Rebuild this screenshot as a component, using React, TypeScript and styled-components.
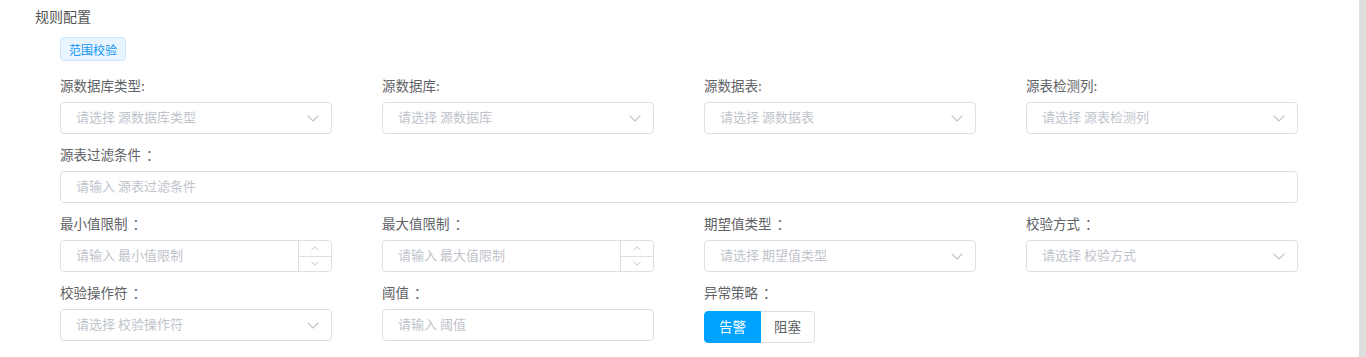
import styled, { createGlobalStyle } from 'styled-components';

const GlobalStyle = createGlobalStyle`
  html, body {
    margin: 0;
    padding: 0;
    background: #fff;
    font-family: "Noto Sans CJK SC", "Noto Sans", "Liberation Sans", sans-serif;
  }
`;

const Page = styled.div`
  display: flex;
  width: 1366px;
  height: 357px;
  overflow: hidden;
`;

const Main = styled.div`
  flex: 1;
  padding: 5px 61px 0 35px;
`;

const Scrollbar = styled.div`
  width: 7px;
  background: #dedede;
`;

const Title = styled.div`
  font-size: 14px;
  line-height: 22px;
  color: #555;
`;

const Form = styled.div`
  padding-left: 25px;
`;

const Tag = styled.div`
  display: inline-flex;
  align-items: center;
  box-sizing: border-box;
  height: 24px;
  margin-top: 10px;
  padding: 0 8px;
  font-size: 12px;
  color: #1296f6;
  background: #e8f4ff;
  border: 1px solid #cfe7fd;
  border-radius: 4px;
`;

const Grid = styled.div`
  display: grid;
  grid-template-columns: repeat(4, 272px);
  column-gap: 50px;
  margin-top: 13px;
`;

const Item = styled.div<{ $full?: boolean }>`
  grid-column: ${(p) => (p.$full ? '1 / -1' : 'auto')};
  margin-bottom: 9px;
`;

const Label = styled.div`
  font-size: 13.5px;
  line-height: 22px;
  color: #606266;
  margin-bottom: 6px;
`;

// full-width colon, drawn with the spacing it has in the reference
const Colon = styled.span`
  display: inline-block;
  padding-left: 5px;
`;

const Field = styled.div`
  display: flex;
  align-items: center;
  box-sizing: border-box;
  height: 32px;
  border: 1px solid #dcdfe6;
  border-radius: 4px;
  background: #fff;
  overflow: hidden;
`;

const Placeholder = styled.span`
  flex: 1;
  padding: 0 0 3px 15px;
  font-size: 13px;
  line-height: 16px;
  color: #c0c4cc;
  white-space: nowrap;
`;

const Caret = styled.span`
  display: flex;
  width: 36px;
  justify-content: center;
  color: #c0c4cc;
`;

const Stepper = styled.div`
  display: flex;
  flex-direction: column;
  width: 32px;
  height: 100%;
  border-left: 1px solid #dcdfe6;
`;

const Step = styled.div<{ $top?: boolean }>`
  flex: 1;
  display: flex;
  align-items: center;
  justify-content: center;
  color: #a8abb2;
  border-bottom: ${(p) => (p.$top ? '1px solid #dcdfe6' : 'none')};
`;

const RadioGroup = styled.div`
  display: inline-flex;
  margin-top: 2px;
`;

const RadioButton = styled.div<{ $active?: boolean; $first?: boolean }>`
  box-sizing: border-box;
  height: 32px;
  padding: 0 ${(p) => (p.$first ? 14 : 13)}px 2px;
  display: flex;
  align-items: center;
  font-size: 13.5px;
  color: ${(p) => (p.$active ? '#fff' : '#606266')};
  background: ${(p) => (p.$active ? '#00a2ff' : '#fff')};
  border: 1px solid ${(p) => (p.$active ? '#00a2ff' : '#dcdfe6')};
  border-left-width: ${(p) => (p.$first ? 1 : 0)}px;
  border-radius: ${(p) => (p.$first ? '4px 0 0 4px' : '0 4px 4px 0')};
`;

const Chevron = ({ up, size = 12 }: { up?: boolean; size?: number }) => (
  <svg width={size} height={size / 2 + 1} viewBox="0 0 12 7" fill="none">
    <path
      d={up ? 'M1 6L6 1L11 6' : 'M1 1L6 6L11 1'}
      stroke="currentColor"
      strokeWidth="1.1"
      strokeLinecap="round"
      strokeLinejoin="round"
    />
  </svg>
);

const Select = ({ placeholder }: { placeholder: string }) => (
  <Field>
    <Placeholder>{placeholder}</Placeholder>
    <Caret>
      <Chevron />
    </Caret>
  </Field>
);

const TextInput = ({ placeholder }: { placeholder: string }) => (
  <Field>
    <Placeholder>{placeholder}</Placeholder>
  </Field>
);

const NumberInput = ({ placeholder }: { placeholder: string }) => (
  <Field>
    <Placeholder>{placeholder}</Placeholder>
    <Stepper>
      <Step $top>
        <Chevron up size={8} />
      </Step>
      <Step>
        <Chevron size={8} />
      </Step>
    </Stepper>
  </Field>
);

const WideLabel = ({ text }: { text: string }) => (
  <Label>
    {text}
    <Colon>：</Colon>
  </Label>
);

export default function App() {
  return (
    <Page>
      <GlobalStyle />
      <Main>
        <Title>规则配置</Title>
        <Form>
          <Tag>范围校验</Tag>
          <Grid>
            <Item>
              <Label>源数据库类型:</Label>
              <Select placeholder="请选择 源数据库类型" />
            </Item>
            <Item>
              <Label>源数据库:</Label>
              <Select placeholder="请选择 源数据库" />
            </Item>
            <Item>
              <Label>源数据表:</Label>
              <Select placeholder="请选择 源数据表" />
            </Item>
            <Item>
              <Label>源表检测列:</Label>
              <Select placeholder="请选择 源表检测列" />
            </Item>

            <Item $full>
              <WideLabel text="源表过滤条件" />
              <TextInput placeholder="请输入 源表过滤条件" />
            </Item>

            <Item>
              <WideLabel text="最小值限制" />
              <NumberInput placeholder="请输入 最小值限制" />
            </Item>
            <Item>
              <WideLabel text="最大值限制" />
              <NumberInput placeholder="请输入 最大值限制" />
            </Item>
            <Item>
              <WideLabel text="期望值类型" />
              <Select placeholder="请选择 期望值类型" />
            </Item>
            <Item>
              <WideLabel text="校验方式" />
              <Select placeholder="请选择 校验方式" />
            </Item>

            <Item>
              <WideLabel text="校验操作符" />
              <Select placeholder="请选择 校验操作符" />
            </Item>
            <Item>
              <WideLabel text="阈值" />
              <TextInput placeholder="请输入 阈值" />
            </Item>
            <Item>
              <WideLabel text="异常策略" />
              <RadioGroup>
                <RadioButton $active $first>告警</RadioButton>
                <RadioButton>阻塞</RadioButton>
              </RadioGroup>
            </Item>
          </Grid>
        </Form>
      </Main>
      <Scrollbar />
    </Page>
  );
}
